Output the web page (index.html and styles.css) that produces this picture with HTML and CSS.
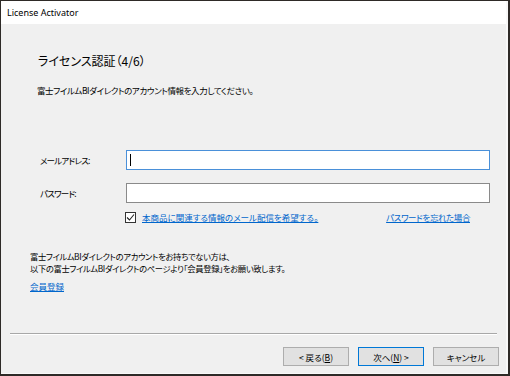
FILE: index.html
```html
<!DOCTYPE html>
<html lang="ja">
<head>
<meta charset="utf-8">
<link rel="stylesheet" href="styles.css">
</head>
<body>
<div class="window">
  <div class="titlebar">License Activator</div>
  <div class="content">
    <div class="heading">ライセンス認証（4/6）</div>
    <div class="lead">富士フイルムBIダイレクトのアカウント情報を入力してください。</div>
    <div class="form">
      <div class="label">メールアドレス:</div>
      <div class="input focus"><span class="caret"></span></div>
      <div class="label">パスワード:</div>
      <div class="input"></div>
      <div class="options">
        <span class="checkbox"><svg width="9" height="9" viewBox="0 0 9 9"><path d="M1 4.5 L3.5 7 L8 1.5" fill="none" stroke="#222" stroke-width="1.1"/></svg></span>
        <a class="link opt-link">本商品に関連する情報のメール配信を希望する。</a>
        <a class="link forgot">パスワードを忘れた場合</a>
      </div>
    </div>
    <div class="info">
      <p>富士フイルムBIダイレクトのアカウントをお持ちでない方は、</p>
      <p>以下の富士フイルムBIダイレクトのページより「会員登録」をお願い致します。</p>
    </div>
    <a class="link register">会員登録</a>
    <div class="footer">
      <div class="separator"></div>
      <div class="buttons">
        <div class="btn">&lt; 戻る(<u>B</u>)</div>
        <div class="btn default">次へ(<u>N</u>) &gt;</div>
        <div class="btn">キャンセル</div>
      </div>
    </div>
  </div>
</div>
</body>
</html>
```

FILE: styles.css
```css
html, body {
  margin: 0;
  padding: 0;
}
body {
  width: 510px;
  height: 376px;
  overflow: hidden;
  background: #2e2a27;
  font-family: "Noto Sans CJK JP", sans-serif;
  color: #000;
}
.window {
  margin: 1px 0 0 1px;
  width: 505px;
  height: 372px;
  background: #f0f0f0;
  border-right: 2px solid #f8f8f8;
  border-bottom: 1px solid #f8f8f8;
  display: flex;
  flex-direction: column;
}
.titlebar {
  height: 23px;
  flex: none;
  background: #fff;
  font-family: "Noto Sans", sans-serif;
  font-size: 9px;
  padding-left: 6px;
  display: flex;
  align-items: center;
}
.content {
  flex: 1;
  display: flex;
  flex-direction: column;
}
.heading {
  margin: 29px 0 0 37px;
  font-size: 12px;
  line-height: 16px;
  font-feature-settings: "palt";
}
.lead {
  margin: 15px 0 0 36px;
  font-size: 8.5px;
  line-height: 12px;
  letter-spacing: -0.4px;
  font-feature-settings: "palt";
}
.form {
  margin: 54px 0 0 39px;
  display: grid;
  grid-template-columns: 86px 364px;
  row-gap: 13px;
  align-items: center;
}
.label {
  font-size: 8.5px;
  line-height: 12px;
  letter-spacing: -0.8px;
  font-feature-settings: "palt";
}
.input {
  height: 20px;
  box-sizing: border-box;
  border: 1px solid #8a8a8a;
  background: #fff;
  display: flex;
  align-items: center;
}
.input.focus {
  border-color: #4a90d9;
}
.caret {
  width: 1px;
  height: 12px;
  margin-left: 3px;
  background: #000;
}
.options {
  grid-column: 2;
  margin-top: -4px;
  display: flex;
  align-items: center;
  line-height: 11px;
}
.checkbox {
  width: 11px;
  height: 11px;
  box-sizing: border-box;
  border: 1px solid #333;
  background: #fff;
  margin-left: -1px;
  display: flex;
  align-items: center;
  justify-content: center;
}
.link {
  color: #0066cc;
  text-decoration: underline;
  font-size: 8.5px;
  font-feature-settings: "palt";
}
.opt-link {
  margin-left: 6px;
}
.forgot {
  margin-left: auto;
  margin-right: 20px;
  letter-spacing: -0.4px;
}
.info {
  margin: 27px 0 0 29px;
  font-size: 8.3px;
  line-height: 12px;
  letter-spacing: -0.35px;
  font-feature-settings: "palt";
}
.info p {
  margin: 0;
}
.register {
  margin: 6px 0 0 29px;
  line-height: 12px;
  align-self: flex-start;
}
.footer {
  margin-top: auto;
  padding-bottom: 7px;
}
.separator {
  margin-left: 9px;
  width: 487px;
  height: 1px;
  background: #a8a8a8;
  border-bottom: 1px solid #fff;
}
.buttons {
  margin-top: 12px;
  display: flex;
  justify-content: flex-end;
  gap: 9px;
  padding-right: 7px;
}
.btn {
  width: 66px;
  height: 19px;
  box-sizing: border-box;
  border: 1px solid #adadad;
  background: #e1e1e1;
  font-size: 8.5px;
  display: flex;
  align-items: center;
  justify-content: center;
  font-feature-settings: "palt";
}
.btn.default {
  border-color: #0078d7;
}
```
